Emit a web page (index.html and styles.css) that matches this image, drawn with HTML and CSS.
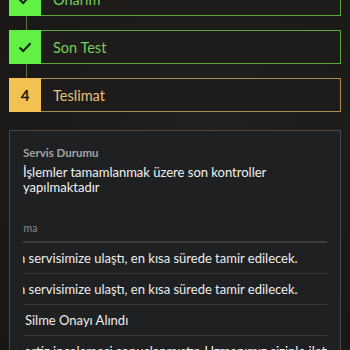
FILE: index.html
```html
<!DOCTYPE html>
<html lang="tr">
<head>
<meta charset="utf-8">
<link rel="stylesheet" href="styles.css">
</head>
<body>
<div class="page">
  <div class="steps">
    <div class="step done">
      <div class="step-icon"><svg width="16" height="16" viewBox="0 0 16 16"><path d="M2.5 8.5 L6.2 12 L13.5 4.2" fill="none" stroke="#14200f" stroke-width="2"/></svg></div>
      <div class="step-label">Onarım</div>
    </div>
    <div class="step done">
      <div class="step-icon"><svg width="16" height="16" viewBox="0 0 16 16"><path d="M2.5 8.5 L6.2 12 L13.5 4.2" fill="none" stroke="#14200f" stroke-width="2"/></svg></div>
      <div class="step-label">Son Test</div>
    </div>
    <div class="step current">
      <div class="step-icon">4</div>
      <div class="step-label">Teslimat</div>
    </div>
  </div>

  <div class="card">
    <div class="card-title">Servis Durumu</div>
    <div class="card-text">İşlemler tamamlanmak üzere son kontroller yapılmaktadır</div>
    <div class="log">
      <div class="log-head"><span class="shift-head">Açıklama</span></div>
      <div class="log-row"><span class="shift-a">n servisimize ulaştı, en kısa sürede tamir edilecek.</span></div>
      <div class="log-row"><span class="shift-a">n servisimize ulaştı, en kısa sürede tamir edilecek.</span></div>
      <div class="log-row"><span class="shift-b">Silme Onayı Alındı</span></div>
      <div class="log-row"><span class="shift-c">pertiz incelemesi sonuçlanmıştır. Uzmanımız sizinle iletişime geçecek.</span></div>
    </div>
  </div>
</div>
</body>
</html>
```

FILE: styles.css
```css
html, body {
  margin: 0;
  padding: 0;
}
body {
  background: radial-gradient(ellipse at 60% 40%, #222120 0%, #1b1a18 60%, #171614 100%);
  font-family: Lato, "Noto Sans", sans-serif;
  width: 350px;
  height: 350px;
  overflow: hidden;
}
.page {
  padding: 0 9px;
  margin-top: -18px;
}
.steps {
  display: flex;
  flex-direction: column;
  gap: 14px;
}
.step {
  position: relative;
  display: flex;
  height: 34px;
  box-sizing: border-box;
  border: 1px solid #58a63e;
  background: #1d1c1b;
}
.step + .step::before {
  content: "";
  position: absolute;
  left: 16px;
  top: -15px;
  width: 1px;
  height: 14px;
  background: #5e7048;
}
.step-icon {
  width: 32px;
  margin: -1px 0 -1px -1px;
  display: flex;
  align-items: center;
  justify-content: center;
  font-weight: 700;
  font-size: 15px;
}
.step-label {
  display: flex;
  align-items: center;
  padding-left: 12px;
  font-size: 14.5px;
}
.done .step-icon {
  background: #62ef46;
}
.done .step-label {
  color: #78cf58;
}
.current {
  border-color: #a98b52;
}
.current .step-icon {
  background: #f3c052;
  color: #1c1a14;
}
.current .step-label {
  color: #e5c27c;
}
.card {
  margin-top: 18px;
  border: 1px solid #47484a;
  background: #1f2022;
  padding: 15px 13px 0;
  height: 260px;
}
.card-title {
  color: #a3a3a3;
  font-size: 11.5px;
  font-weight: 700;
  line-height: 14px;
}
.card-text {
  margin-top: 5px;
  color: #f1f1f1;
  font-size: 13px;
  line-height: 15px;
  width: 280px;
}
.log {
  margin-top: 27px;
  overflow: hidden;
  white-space: nowrap;
}
.log-head {
  font-size: 10.5px;
  color: #8a8a8a;
  height: 19px;
  border-bottom: 2px solid #3c3d3f;
}
.shift-head {
  display: inline-block;
  margin-left: -27px;
}
.log-row {
  height: 30px;
  line-height: 30px;
  border-bottom: 1px solid #3a3b3d;
  font-size: 13px;
  color: #ededed;
}
.shift-a {
  display: inline-block;
  margin-left: -5px;
}
.shift-b {
  display: inline-block;
  margin-left: 2px;
}
.shift-c {
  display: inline-block;
  margin-left: -6px;
}
```
